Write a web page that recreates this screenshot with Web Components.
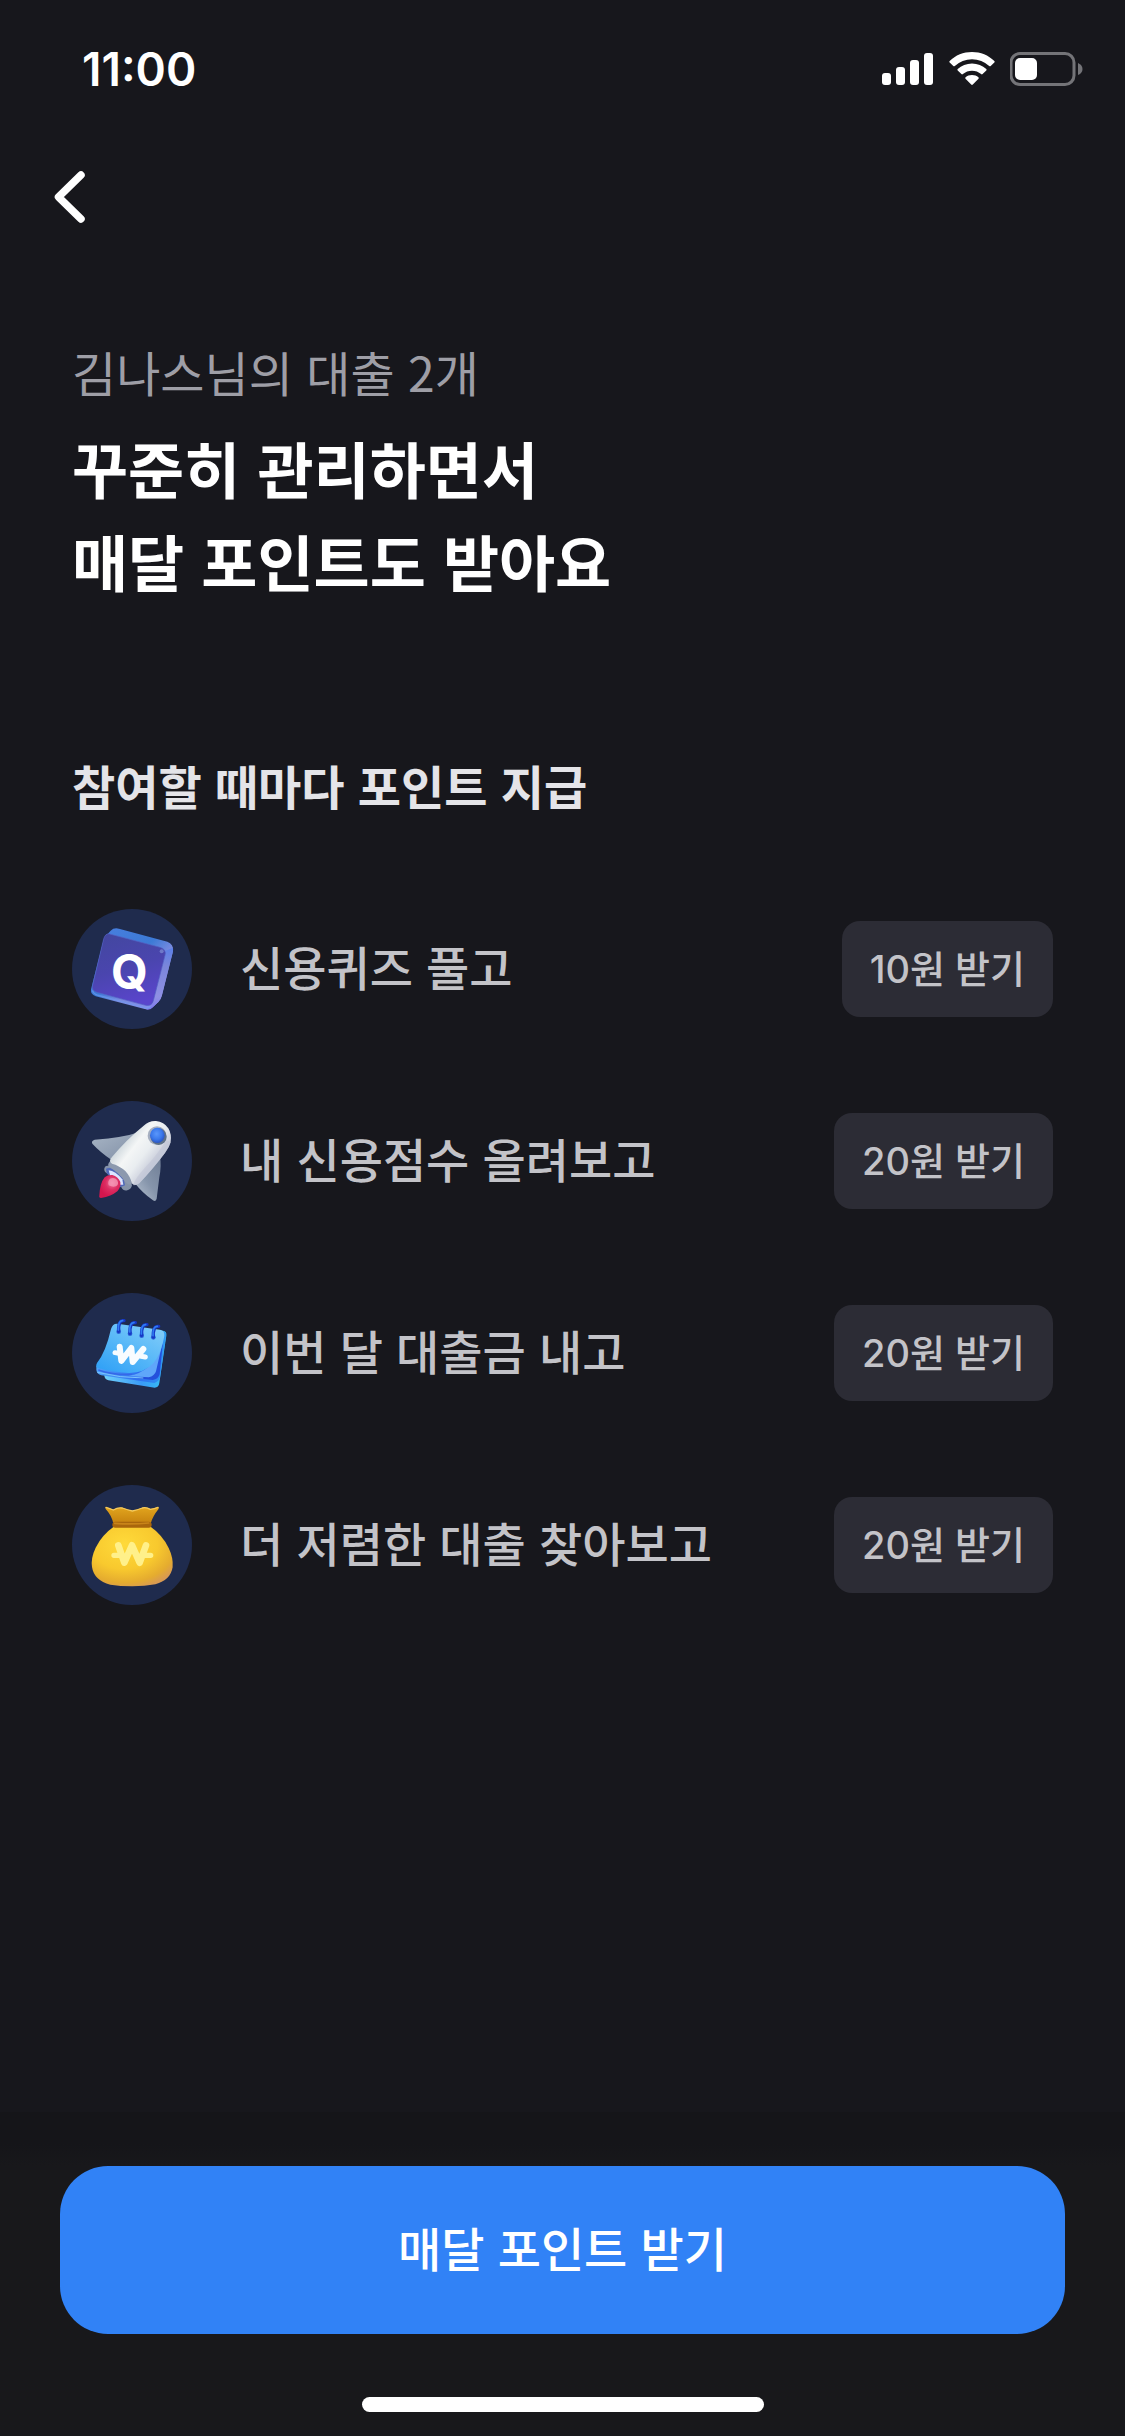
<!DOCTYPE html>
<html lang="ko">
<head>
<meta charset="utf-8">
<meta name="viewport" content="width=device-width, initial-scale=1">
<title>매달 포인트 받기</title>
<style>
  :root {
    --bg: #17171c;
    --text-strong: #ffffff;
    --text: #e4e4e8;
    --text-soft: #c3c3c8;
    --text-muted: #9e9ea6;
    --pill: #2c2c35;
    --badge: #1f2b4d;
    --accent: #3182f6;
    --font-ko: "Noto Sans CJK KR", "Noto Sans", sans-serif;
    --font-num: Inter, "Noto Sans CJK KR", sans-serif;
    --gutter: 72px;
  }
  html { background: var(--bg); }
  body { margin: 0; font-family: var(--font-ko); color: var(--text); }
</style>
</head>
<body>
<points-page>
  <status-bar slot="top" time="11:00"></status-bar>
  <nav-bar slot="top"></nav-bar>

  <page-heading>
    <span slot="eyebrow">김나스님의 대출 2개</span>
    꾸준히 관리하면서<br>매달 포인트도 받아요
  </page-heading>

  <mission-list>
    <span slot="title">참여할 때마다 포인트 지급</span>
    <mission-row icon="quiz" reward="10원 받기">신용퀴즈 풀고</mission-row>
    <mission-row icon="rocket" reward="20원 받기">내 신용점수 올려보고</mission-row>
    <mission-row icon="calendar" reward="20원 받기">이번 달 대출금 내고</mission-row>
    <mission-row icon="bag" reward="20원 받기">더 저렴한 대출 찾아보고</mission-row>
  </mission-list>

  <action-footer slot="bottom">매달 포인트 받기</action-footer>
</points-page>

<script>
const define = (name, html, setup) => {
  const template = document.createElement('template');
  template.innerHTML = html;
  customElements.define(name, class extends HTMLElement {
    constructor() {
      super();
      this.attachShadow({ mode: 'open' }).append(template.content.cloneNode(true));
    }
    connectedCallback() {
      if (setup) setup(this, this.shadowRoot);
    }
  });
};

define('points-page', `
  <style>
    :host { display: flex; flex-direction: column; min-height: 100vh; background: var(--bg); }
    main { flex: 1; padding: 0 var(--gutter); }
  </style>
  <header><slot name="top"></slot></header>
  <main><slot></slot></main>
  <slot name="bottom"></slot>
`);

define('status-bar', `
  <style>
    :host { display: flex; align-items: center; justify-content: space-between;
      height: 138px; padding: 0 41px 0 82px; color: var(--text-strong); }
    time { font: 600 46px/60px var(--font-num); }
    .icons { display: flex; align-items: center; gap: 15px; }
    svg { display: block; }
  </style>
  <time></time>
  <div class="icons">
    <svg width="52" height="34" viewBox="0 0 52 34" fill="#fff" role="img" aria-label="신호">
      <rect x="0" y="21" width="9" height="12" rx="3"/>
      <rect x="14" y="15" width="9" height="18" rx="3"/>
      <rect x="28" y="8" width="9" height="25" rx="3"/>
      <rect x="42" y="1" width="9" height="32" rx="3"/>
    </svg>
    <svg width="46" height="34" viewBox="0 0 46 34" fill="#fff" role="img" aria-label="와이파이">
      <path d="M23 0C31.600 0 39.500 3.300 45.300 8.900Q46 9.600 45.300 10.400L41.700 14Q41 14.700 40.200 14A25 25 0 0 0 5.800 14Q5 14.700 4.300 14L.7 10.400Q0 9.600 .7 8.900C6.500 3.300 14.400 0 23 0Z"/>
      <path d="M23 11.500C28.500 11.500 33.500 13.600 37.300 17.100Q38 17.800 37.300 18.500L33.600 22.100Q32.900 22.800 32.100 22.100A13.700 13.700 0 0 0 13.900 22.100Q13.100 22.800 12.400 22.100L8.700 18.500Q8 17.800 8.700 17.100C12.500 13.600 17.500 11.500 23 11.500Z"/>
      <path d="M23 22.900C25.700 22.900 27.700 23.800 29.400 25.200Q30.200 26 29.500 26.700L23.800 32.600Q23 33.400 22.200 32.600L16.500 26.700Q15.800 26 16.600 25.200C18.300 23.800 20.300 22.900 23 22.900Z"/>
    </svg>
    <svg width="74" height="34" viewBox="0 0 74 34" role="img" aria-label="배터리">
      <rect x="1" y="1.500" width="63" height="31" rx="9" fill="none" stroke="#747478" stroke-width="3"/>
      <path d="M68 11Q72.500 13 72.500 17T68 23Z" fill="#747478"/>
      <rect x="5" y="6" width="22" height="22" rx="5" fill="#fff"/>
    </svg>
  </div>
`, (host, root) => { root.querySelector('time').textContent = host.getAttribute('time'); });

define('nav-bar', `
  <style>
    :host { display: flex; align-items: center; height: 118px; padding: 0 48px; }
    button { display: flex; padding: 0; border: 0; background: none; cursor: pointer; }
  </style>
  <button type="button" aria-label="뒤로">
    <svg width="44" height="60" viewBox="0 0 44 60">
      <path d="M33 8L10.500 30L33 52" fill="none" stroke="#fff" stroke-width="7.500" stroke-linecap="round" stroke-linejoin="round"/>
    </svg>
  </button>
`);

define('page-heading', `
  <style>
    :host { display: flex; flex-direction: column; gap: 14px; padding-top: 79px; }
    p, h1 { margin: 0; }
    p { font-size: 48px; line-height: 72px; color: var(--text-muted); }
    h1 { font-size: 61px; line-height: 93px; font-weight: 700; color: var(--text-strong); }
  </style>
  <p><slot name="eyebrow"></slot></p>
  <h1><slot></slot></h1>
`);

define('mission-list', `
  <style>
    :host { display: block; padding-top: 142px; }
    h2 { margin: 0 0 88px; font-size: 47px; line-height: 72px; font-weight: 700; color: var(--text); }
    .rows { display: flex; flex-direction: column; gap: 72px; }
  </style>
  <h2><slot name="title"></slot></h2>
  <div class="rows" role="list"><slot></slot></div>
`);

const ICONS = {
  quiz: `
    <svg viewBox="36 42 360 360">
      <defs>
        <linearGradient id="side" x1="0" y1="0" x2="1" y2="1">
          <stop offset="0" stop-color="#4a7fe0"/><stop offset=".45" stop-color="#3c7ad6"/>
          <stop offset=".62" stop-color="#7b8be0"/><stop offset="1" stop-color="#8f8ff0"/>
        </linearGradient>
        <linearGradient id="face" x1=".2" y1="0" x2=".5" y2="1">
          <stop offset="0" stop-color="#4347a0"/><stop offset=".5" stop-color="#4a45ae"/><stop offset="1" stop-color="#5a45cc"/>
        </linearGradient>
        <linearGradient id="edge" x1="0" y1="0" x2="0" y2="1">
          <stop offset="0" stop-color="#5a7fe8"/><stop offset=".3" stop-color="#7a86da"/>
          <stop offset=".8" stop-color="#8f90e4"/><stop offset="1" stop-color="#7d78f0"/>
        </linearGradient>
      </defs>
      <path d="M137 124L152 107Q162 97 177 101L322 140Q341 147 339 167L306 301Q303 313 295 321L278 337Q269 346 254 342L107 304Q91 298 93 283L130 138Z" fill="url(#side)"/>
      <path d="M315 168L339 158Q340 166 338 174L305 303Q303 313 295 321L276 339Q270 345 258 343Q274 340 279 322Z" fill="url(#edge)"/>
      <path d="M149 117L300 157Q320 163 315 181L280 317Q275 335 257 331L111 292Q94 287 98 271L131 132Q136 114 149 117Z" fill="url(#face)" stroke="#5360c4" stroke-width="2"/>
      <path d="M97 286Q100 296 111 300L254 338Q264 340 272 335" fill="none" stroke="#6f9cf0" stroke-width="4" opacity=".6"/>
      <circle cx="305" cy="169" r="6" fill="#7f8fd4" opacity=".7"/>
      <text x="208" y="281" text-anchor="middle" font-family="Inter, sans-serif" font-weight="700" font-size="142" fill="#fff">Q</text>
    </svg>`,
  rocket: `
    <svg viewBox="36 33 360 360">
      <defs>
        <linearGradient id="body" gradientUnits="userSpaceOnUse" x1="190" y1="160" x2="275" y2="225">
          <stop offset="0" stop-color="#d3dbe0"/><stop offset=".3" stop-color="#f4f6f6"/>
          <stop offset=".65" stop-color="#e9edf0"/><stop offset="1" stop-color="#cbcfdc"/>
        </linearGradient>
        <linearGradient id="wing" x1="0" y1="0" x2="1" y2="1">
          <stop offset="0" stop-color="#a9b6c6"/><stop offset="1" stop-color="#7e8da4"/>
        </linearGradient>
        <linearGradient id="fin" x1="1" y1="0" x2=".2" y2="1">
          <stop offset="0" stop-color="#6f7d95"/><stop offset=".6" stop-color="#8695ab"/><stop offset="1" stop-color="#aebaca"/>
        </linearGradient>
        <radialGradient id="glass" cx=".45" cy=".4" r=".6">
          <stop offset="0" stop-color="#5a97fb"/><stop offset=".6" stop-color="#3b79ec"/><stop offset="1" stop-color="#2a55c4"/>
        </radialGradient>
        <radialGradient id="flame" cx=".6" cy=".35" r=".6">
          <stop offset="0" stop-color="#f0709a"/><stop offset=".5" stop-color="#dc2d62"/><stop offset="1" stop-color="#d3164e"/>
        </radialGradient>
      </defs>
      <path d="M238 126Q190 143 104 149Q93 152 97 161Q121 187 155 210Q182 190 214 145Z" fill="url(#wing)"/>
      <path d="M300 200Q305 225 298 262L290 326Q287 336 279 331Q246 307 226 281Q270 240 300 200Z" fill="url(#fin)"/>
      <path d="M135 230Q145 222 175 240Q208 262 216 286Q214 298 202 301Q190 304 184 292Q176 262 138 248Q129 240 135 230Z" fill="#8492a8"/>
      <path d="M138 236Q152 229 173 246Q194 262 195 286L180 292L140 250Z" fill="#4f68b8"/>
      <path d="M146 241Q166 243 187 268L190 284L176 284L150 256Z" fill="#dbe4ff"/>
      <path d="M162 204Q180 216 203 238Q217 254 215 283Q208 287 198 278Q176 248 148 231Q140 226 150 214Z" fill="#8c99ae"/>
      <path d="M251 107Q266 92 288 93Q312 95 325 115Q336 133 332 157Q328 172 315 189Q282 233 238 280Q224 290 215 280Q213 262 196 243Q177 226 156 221Q144 213 156 201Q199 149 251 107Z" fill="url(#body)"/>
      <path d="M332 157Q328 172 315 189Q282 233 238 280Q228 288 219 285Q228 262 256 232Q296 190 318 150Z" fill="#bcc2d2" opacity=".45"/>
      <ellipse cx="291" cy="137" rx="28" ry="28" fill="#a6afc0"/>
      <ellipse cx="296" cy="140" rx="24" ry="25" fill="#5d7088"/>
      <ellipse cx="292" cy="136" rx="22" ry="23" fill="url(#glass)"/>
      <path d="M134 262Q143 254 157 255Q174 260 181 276Q183 292 172 304Q154 319 123 324Q116 324 118 316Q120 279 134 262Z" fill="url(#flame)"/>
      <path d="M150 266Q163 260 172 271Q178 284 168 289Q158 293 146 286Q142 274 150 266Z" fill="#f7a3bd" opacity=".7"/>
    </svg>`,
  calendar: `
    <svg viewBox="36 39 360 360">
      <defs>
        <linearGradient id="page" x1=".1" y1="1" x2=".9" y2="0">
          <stop offset="0" stop-color="#2fa0f6"/><stop offset=".5" stop-color="#58b8f8"/><stop offset="1" stop-color="#83cdf9"/>
        </linearGradient>
        <linearGradient id="back" x1="0" y1="0" x2="1" y2="0">
          <stop offset="0" stop-color="#4ea4f8"/><stop offset=".6" stop-color="#2f6ff0"/><stop offset="1" stop-color="#2f98f4"/>
        </linearGradient>
        <linearGradient id="base" x1="0" y1="0" x2="1" y2="0">
          <stop offset="0" stop-color="#6fd0fb"/><stop offset=".6" stop-color="#3a9bf6"/><stop offset="1" stop-color="#35c3f6"/>
        </linearGradient>
      </defs>
      <path d="M294 151L309 152Q321 154 319 167L298 309Q296 323 284 323L145 301Q133 298 133 286L150 240Z" fill="url(#base)"/>
      <path d="M302 153Q320 153 318 167L300 292Q297 305 283 309L124 286Q111 283 109 270L109 258L150 240Z" fill="url(#back)"/>
      <path d="M309 185L299 283Q295 298 278 300L232 295Q282 281 309 185Z" fill="#2450dc"/>
      <path d="M306 196L288 274Q284 288 266 292L205 288Q276 278 306 196Z" fill="#5fa6fa"/>
      <path d="M115 270Q160 286 216 283" fill="none" stroke="#3668e8" stroke-width="4"/>
      <path d="M112 277Q180 294 250 294" fill="none" stroke="#7bc4fb" stroke-width="3"/>
      <path d="M172 131L300 149Q315 152 313 168Q304 222 280 250Q252 280 205 279Q155 276 114 264Q105 260 111 249Q137 217 153 147Q158 130 172 131Z" fill="url(#page)"/>
      <g fill="#2a63d8"><circle cx="176" cy="155" r="7"/><circle cx="210" cy="161" r="7"/><circle cx="245" cy="167" r="7"/><circle cx="280" cy="172" r="7"/></g>
      <g fill="none" stroke-linecap="round">
        <g stroke="#1737c4" stroke-width="10">
          <path d="M176 154Q174 120 192 122"/><path d="M210 160Q208 126 226 128"/><path d="M245 166Q243 132 261 134"/><path d="M280 171Q278 137 296 139"/>
        </g>
        <g stroke="#2f7df4" stroke-width="5">
          <path d="M175 150Q174 121 188 122"/><path d="M209 156Q208 127 222 128"/><path d="M244 162Q243 133 257 134"/><path d="M279 167Q278 138 292 139"/>
        </g>
      </g>
      <g fill="none" stroke="#fff" stroke-linecap="round" stroke-linejoin="round" opacity=".96">
        <path d="M179 200L184 243L214 204L218 246L250 207" stroke-width="18"/>
        <path d="M165 218L181 221M243 229L256 231" stroke-width="15"/>
      </g>
    </svg>`,
  bag: `
    <svg viewBox="36 30 360 360">
      <defs>
        <radialGradient id="sack" cx=".4" cy=".3" r=".75">
          <stop offset="0" stop-color="#ffda3a"/><stop offset=".55" stop-color="#f8c92e"/>
          <stop offset=".85" stop-color="#e5ac2f"/><stop offset="1" stop-color="#d89a52"/>
        </radialGradient>
        <linearGradient id="neck" x1="0" y1="0" x2="0" y2="1">
          <stop offset="0" stop-color="#e2a51e"/><stop offset="1" stop-color="#c6820f"/>
        </linearGradient>
      </defs>
      <path d="M138 96Q149 100 160 104Q173 96 187 98Q203 104 217 107Q232 104 247 98Q259 95 271 102Q283 101 293 96Q299 97 295 103Q278 124 272 146L160 146Q155 121 137 102Q134 97 138 96Z" fill="url(#neck)"/>
      <path d="M138 97Q149 100 160 105Q173 97 187 99Q203 105 217 108Q232 105 247 99Q259 96 271 103Q283 102 294 97" fill="none" stroke="#f4c95c" stroke-width="4" stroke-linecap="round"/>
      <path d="M163 154Q126 180 107 218Q92 249 96 276Q102 316 151 329Q180 334 217 334Q255 334 286 328Q332 315 338 276Q340 248 326 219Q307 180 270 154Z" fill="url(#sack)"/>
      <rect x="157" y="140" width="118" height="18" rx="9" fill="#a9660c"/>
      <path d="M164 145Q215 149 266 144" fill="none" stroke="#c98418" stroke-width="5" stroke-linecap="round"/>
      <g fill="none" stroke="#fff08a" stroke-linecap="round" stroke-linejoin="round">
        <path d="M175 211L193 263L216 211L239 263L258 211" stroke-width="20"/>
        <path d="M162 241L182 241M252 241L272 241" stroke-width="16"/>
      </g>
    </svg>`
};

define('mission-icon', `
  <style>
    :host { display: block; flex: none; width: 120px; height: 120px; border-radius: 50%; overflow: hidden; background: var(--badge); }
    svg { display: block; width: 100%; height: 100%; }
  </style>
`, (host, root) => {
  const holder = document.createElement('template');
  holder.innerHTML = ICONS[host.getAttribute('name')];
  root.append(holder.content);
});

define('reward-button', `
  <style>
    :host { display: block; flex: none; }
    button { height: 96px; padding: 0 28px; border: 0; border-radius: 18px; background: var(--pill);
      color: var(--text-soft); font: 500 38px/56px var(--font-num); white-space: nowrap; cursor: pointer; }
  </style>
  <button type="button"><slot></slot></button>
`);

define('mission-row', `
  <style>
    :host { display: flex; align-items: center; gap: 48px; }
    .label { flex: 1; padding-bottom: 6px; font-size: 47px; line-height: 72px; font-weight: 500; color: var(--text-soft); }
  </style>
  <span class="label"><slot></slot></span>
  <reward-button></reward-button>
`, (host, root) => {
  host.setAttribute('role', 'listitem');
  const icon = document.createElement('mission-icon');
  icon.setAttribute('name', host.getAttribute('icon'));
  icon.setAttribute('aria-hidden', 'true');
  root.querySelector('.label').before(icon);
  root.querySelector('reward-button').textContent = host.getAttribute('reward');
});

define('action-footer', `
  <style>
    :host { display: flex; flex-direction: column; align-items: center; gap: 63px; padding: 54px 60px 24px;
      background: linear-gradient(#151519, #151519 32px, #18181b 54px); }
    button { width: 100%; height: 168px; padding: 0 0 6px; border: 0; border-radius: 48px; background: var(--accent);
      color: #fff; font: 500 47px/72px var(--font-ko); cursor: pointer; }
    .home { width: 402px; height: 15px; border-radius: 8px; background: #fff; }
  </style>
  <button type="button"><slot></slot></button>
  <div class="home"></div>
`);
</script>
</body>
</html>
